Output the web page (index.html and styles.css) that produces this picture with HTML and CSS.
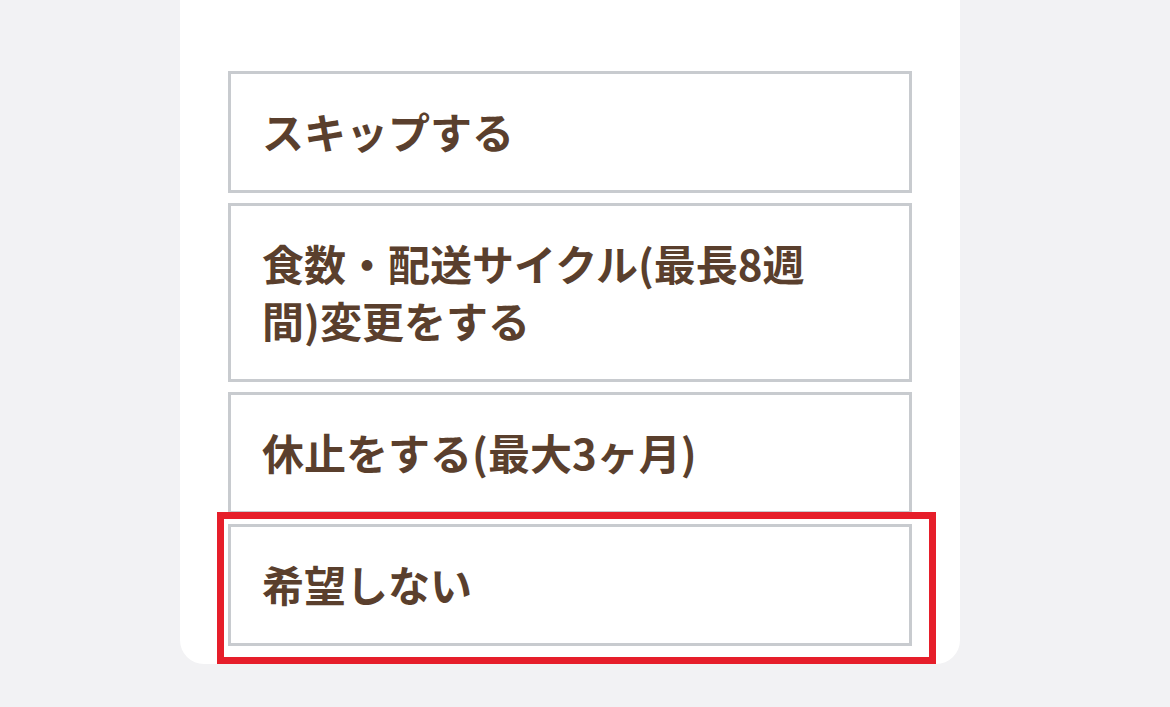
FILE: index.html
```html
<!DOCTYPE html>
<html>
<head>
  <meta charset="utf-8">
  <link rel="stylesheet" href="styles.css">
</head>
<body>
  <div class="card">
    <div class="options">
      <button class="option">スキップする</button>
      <button class="option">食数・配送サイクル(最長8週間)変更をする</button>
      <button class="option">休止をする(最大3ヶ月)</button>
      <button class="option highlighted">希望しない</button>
    </div>
  </div>
</body>
</html>
```

FILE: styles.css
```css
body {
  margin: 0;
  padding: 0;
  background: #f2f2f4;
  font-family: "Noto Sans CJK JP", "Noto Sans", sans-serif;
  color: #5a3f2d;
}

.card {
  width: 780px;
  margin-left: 180px;
  padding: 71px 48px 18px;
  box-sizing: border-box;
  background: #fff;
  border-radius: 0 0 24px 24px;
}

.options {
  display: flex;
  flex-direction: column;
  gap: 10px;
}

.option {
  position: relative;
  display: block;
  width: 100%;
  padding: 27.5px 80px 31.5px 31px;
  background: #fff;
  border: 3px solid #c8cbcf;
  color: inherit;
  font-family: inherit;
  font-size: 42px;
  font-weight: 700;
  line-height: 57px;
  text-align: left;
  cursor: pointer;
}

.option.highlighted::after {
  content: "";
  position: absolute;
  left: -14px;
  right: -27px;
  top: -15px;
  bottom: -21px;
  border: 7px solid #e61e2a;
  pointer-events: none;
}
```
